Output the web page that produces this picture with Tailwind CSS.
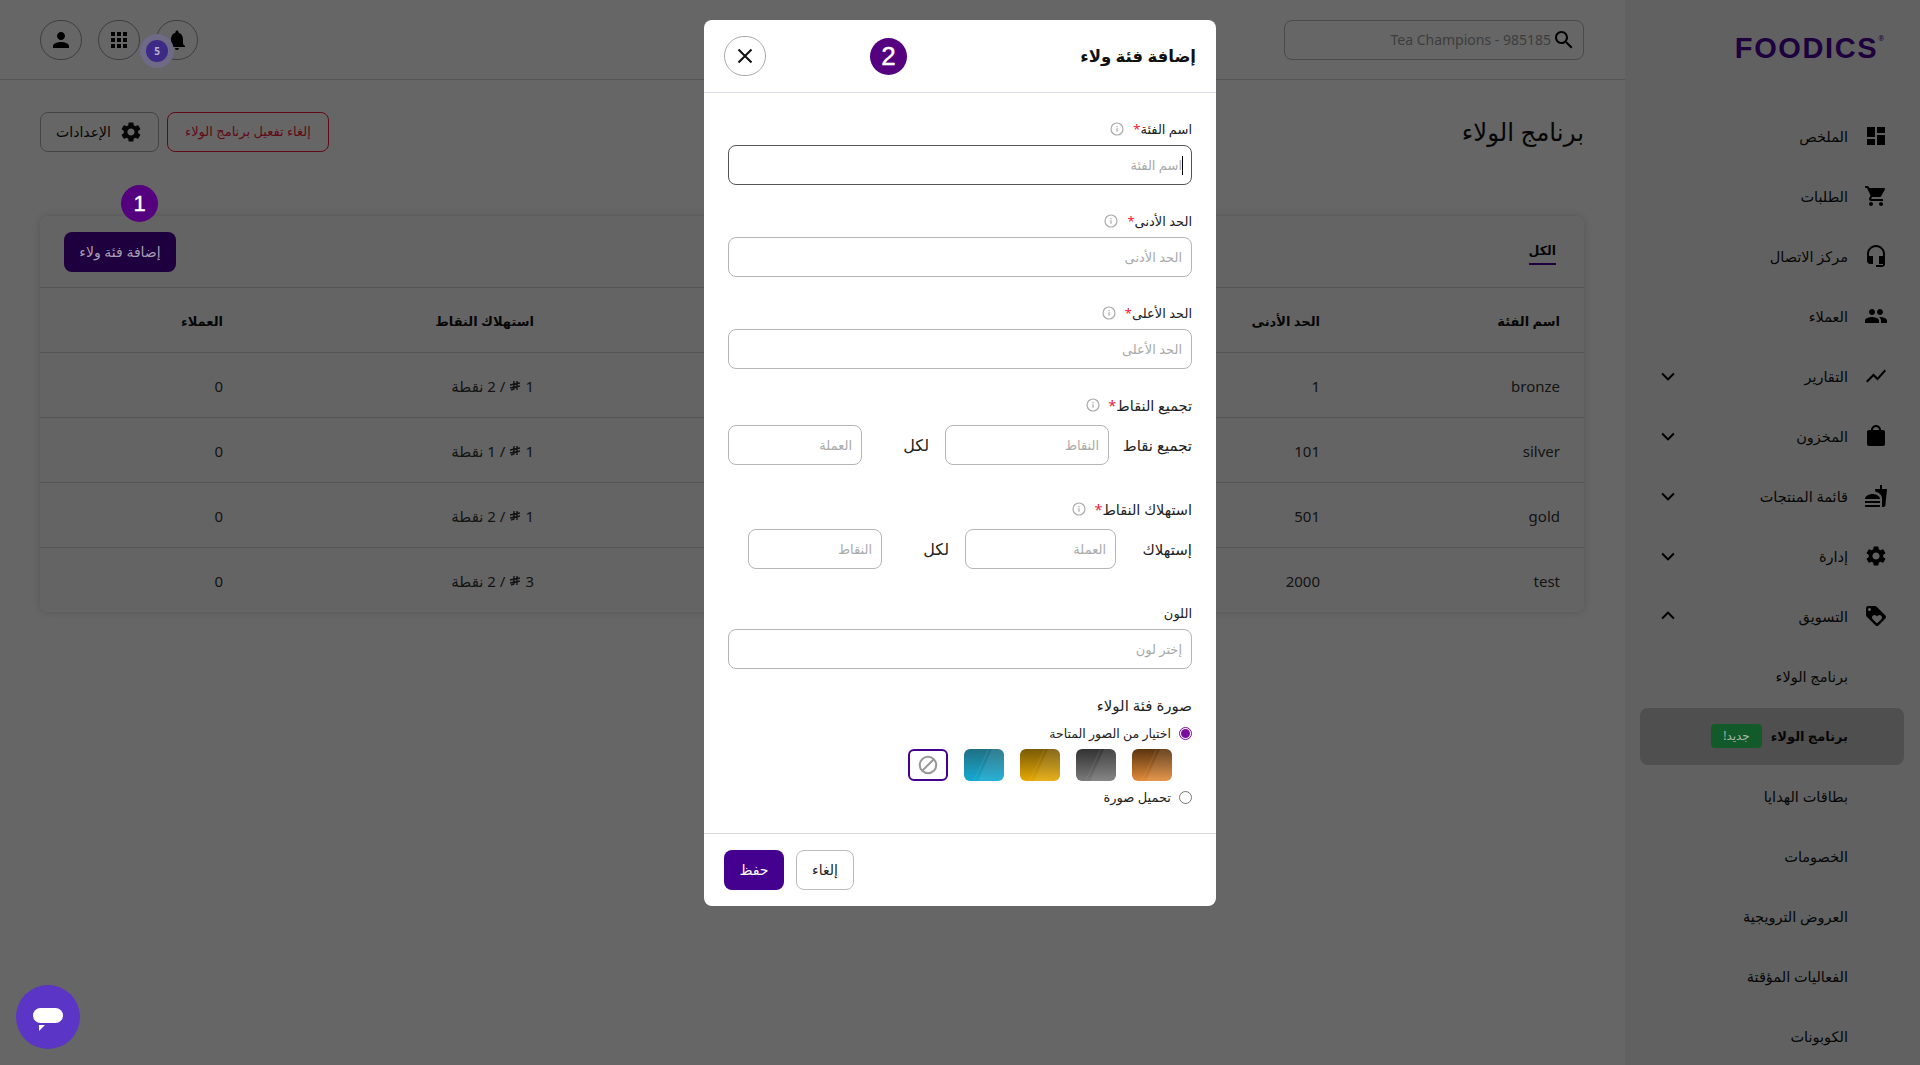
<!DOCTYPE html>
<html lang="ar">
<head>
<meta charset="utf-8">
<title>برنامج الولاء</title>
<script src="https://cdn.jsdelivr.net/npm/@tailwindcss/browser@4"></script>
</head>
<body class="overflow-hidden">
<div dir="ltr" class="relative w-[1920px] h-[1065px] overflow-hidden flex bg-white text-[#111] font-['Noto_Sans','DejaVu_Sans',sans-serif]">

  <!-- MAIN -->
  <main class="w-[1625px] h-full flex flex-col">
    <header class="h-20 shrink-0 border-b border-[#d4d4d4] pl-10 pr-[41px] flex items-center justify-between">
      <div class="flex items-center gap-4">
        <div class="w-[42px] h-10 rounded-full border border-[#999] flex items-center justify-center">
          <svg viewBox="0 0 24 24" class="w-6 h-6" fill="#000"><path d="M12 12c2.21 0 4-1.79 4-4s-1.79-4-4-4-4 1.79-4 4 1.79 4 4 4zm0 2c-2.67 0-8 1.34-8 4v2h16v-2c0-2.66-5.33-4-8-4z"/></svg>
        </div>
        <div class="w-[42px] h-10 rounded-full border border-[#999] flex items-center justify-center">
          <svg viewBox="0 0 24 24" class="w-6 h-6" fill="#000"><path d="M4 8h4V4H4v4zm6 12h4v-4h-4v4zm-6 0h4v-4H4v4zm0-6h4v-4H4v4zm6 0h4v-4h-4v4zm6-10v4h4V4h-4zm-6 4h4V4h-4v4zm6 6h4v-4h-4v4zm0 6h4v-4h-4v4z"/></svg>
        </div>
        <div class="w-[42px] h-10 rounded-full border border-[#999] flex items-center justify-center">
          <svg viewBox="0 0 24 24" class="w-6 h-6" fill="#000"><path d="M12 22c1.1 0 2-.9 2-2h-4c0 1.1.89 2 2 2zm6-6v-5c0-3.07-1.64-5.64-4.5-6.32V4c0-.83-.67-1.5-1.5-1.5s-1.5.67-1.5 1.5v.68C7.63 5.36 6 7.92 6 11v5l-2 2v1h16v-1l-2-2z"/></svg>
        </div>
      </div>
      <div dir="rtl" class="w-[300px] h-10 rounded-lg border border-[#bbb] flex items-center pr-[7px]">
        <svg viewBox="0 0 24 24" class="w-6 h-6 shrink-0 ml-[1px]" fill="#000"><path d="M15.5 14h-.79l-.28-.27C15.41 12.59 16 11.11 16 9.5 16 5.91 13.09 3 9.5 3S3 5.91 3 9.5 5.91 16 9.5 16c1.61 0 3.09-.59 4.23-1.57l.27.28v.79l5 4.99L20.49 19l-4.99-5zm-6 0C7.01 14 5 11.99 5 9.5S7.01 5 9.5 5 14 7.01 14 9.5 11.99 14 9.5 14z"/></svg>
        <span dir="ltr" class="text-sm text-[#9a9a9a]">Tea Champions - 985185</span>
      </div>
    </header>

    <div class="pl-10 pr-[41px] pt-8">
      <div class="flex items-center justify-between h-10">
        <div class="flex items-center gap-2">
          <button class="w-[119px] h-10 rounded-lg border border-[#aaa] flex items-center justify-center gap-2 text-sm">
            <span dir="rtl" class="order-2">الإعدادات</span>
            <svg viewBox="0 0 24 24" class="w-6 h-6 order-3" fill="#111"><path d="M19.14 12.94c.04-.3.06-.61.06-.94 0-.32-.02-.64-.07-.94l2.03-1.58c.18-.14.23-.41.12-.61l-1.92-3.32c-.12-.22-.37-.29-.59-.22l-2.39.96c-.5-.38-1.03-.7-1.62-.94l-.36-2.54c-.04-.24-.24-.41-.48-.41h-3.84c-.24 0-.43.17-.47.41l-.36 2.54c-.59.24-1.13.57-1.62.94l-2.39-.96c-.22-.08-.47 0-.59.22L2.74 8.87c-.12.21-.08.47.12.61l2.03 1.58c-.05.3-.09.63-.09.94s.02.64.07.94l-2.03 1.58c-.18.14-.23.41-.12.61l1.92 3.32c.12.22.37.29.59.22l2.39-.96c.5.38 1.03.7 1.62.94l.36 2.54c.05.24.24.41.48.41h3.84c.24 0 .44-.17.47-.41l.36-2.54c.59-.24 1.13-.56 1.62-.94l2.39.96c.22.08.47 0 .59-.22l1.92-3.32c.12-.22.07-.47-.12-.61l-2.01-1.58zM12 15.6c-1.98 0-3.6-1.62-3.6-3.6s1.62-3.6 3.6-3.6 3.6 1.62 3.6 3.6-1.62 3.6-3.6 3.6z"/></svg>
          </button>
          <button dir="rtl" class="w-[162px] h-10 rounded-lg border border-[#f0183a] text-[#f0183a] text-[13px] whitespace-nowrap">إلغاء تفعيل برنامج الولاء</button>
        </div>
        <h1 dir="rtl" class="text-[24.5px] leading-10 text-[#111]">برنامج الولاء</h1>
      </div>

      <section class="mt-16 h-[396px] rounded-lg bg-[#fbfbfb] shadow-[0_0_8px_rgba(0,0,0,0.16)]">
        <div class="h-[72px] border-b border-[#d4d4d4] px-6 flex items-center justify-between">
          <button dir="rtl" class="w-28 h-10 rounded-lg bg-[#4a0099] text-sm"><span class="relative z-10 text-[#a99db5]">إضافة فئة ولاء</span></button>
          <span dir="rtl" class="mr-1 text-[12.5px] font-bold border-b-2 border-[#4a0099] pb-[3px] mt-[4px]">الكل</span>
        </div>
        <div dir="rtl">
          <div class="grid grid-cols-[240px_220px_260px_306px_311px_207px] h-[65px] items-center border-b border-[#d4d4d4] font-bold text-[13px] pt-[4px] [&>*]:pr-6">
            <div>اسم الفئة</div><div>الحد الأدنى</div><div></div><div></div><div>استهلاك النقاط</div><div>العملاء</div>
          </div>
          <div class="grid grid-cols-[240px_220px_260px_306px_311px_207px] h-[65px] items-center border-b border-[#d4d4d4] text-[#333] text-[15px] pt-[2px] [&>*]:pr-6">
            <div>bronze</div><div>1</div><div></div><div></div>
            <div class="flex items-center gap-1"><span>1</span><svg viewBox="0 0 12 12" class="w-3 h-3" fill="none" stroke="#333" stroke-width="1.4"><path d="M5 1v8l-3 1M8 1v9M1 5l10-2M1 8l10-2"/></svg><span>/ 2 نقطة</span></div><div>0</div>
          </div>
          <div class="grid grid-cols-[240px_220px_260px_306px_311px_207px] h-[65px] items-center border-b border-[#d4d4d4] text-[#333] text-[15px] pt-[2px] [&>*]:pr-6">
            <div>silver</div><div>101</div><div></div><div></div>
            <div class="flex items-center gap-1"><span>1</span><svg viewBox="0 0 12 12" class="w-3 h-3" fill="none" stroke="#333" stroke-width="1.4"><path d="M5 1v8l-3 1M8 1v9M1 5l10-2M1 8l10-2"/></svg><span>/ 1 نقطة</span></div><div>0</div>
          </div>
          <div class="grid grid-cols-[240px_220px_260px_306px_311px_207px] h-[65px] items-center border-b border-[#d4d4d4] text-[#333] text-[15px] pt-[2px] [&>*]:pr-6">
            <div>gold</div><div>501</div><div></div><div></div>
            <div class="flex items-center gap-1"><span>1</span><svg viewBox="0 0 12 12" class="w-3 h-3" fill="none" stroke="#333" stroke-width="1.4"><path d="M5 1v8l-3 1M8 1v9M1 5l10-2M1 8l10-2"/></svg><span>/ 2 نقطة</span></div><div>0</div>
          </div>
          <div class="grid grid-cols-[240px_220px_260px_306px_311px_207px] h-[64px] items-center text-[#333] text-[15px] pt-[2px] [&>*]:pr-6">
            <div>test</div><div>2000</div><div></div><div></div>
            <div class="flex items-center gap-1"><span>3</span><svg viewBox="0 0 12 12" class="w-3 h-3" fill="none" stroke="#333" stroke-width="1.4"><path d="M5 1v8l-3 1M8 1v9M1 5l10-2M1 8l10-2"/></svg><span>/ 2 نقطة</span></div><div>0</div>
          </div>
        </div>
      </section>
    </div>
  </main>

  <!-- SIDEBAR -->
  <aside dir="rtl" class="w-[295px] h-full shrink-0 bg-[#f2f2f2] overflow-hidden">
    <div class="h-[106px] pr-[36px] pt-[34px]" dir="ltr">
      <div class="flex justify-end items-start">
        <span class="text-[29px] leading-[28px] font-black tracking-[1.6px] text-[#4a0099] font-['Liberation_Sans',sans-serif]">FOODICS</span>
        <span class="text-[7px] leading-[10px] text-[#4a0099]">®</span>
      </div>
    </div>
    <nav class="text-[14.5px] text-[#111] [&_span.mr-\[16px\]]:mt-[2px]">
      <div class="h-[60px] flex items-center pr-[32px]"><svg viewBox="0 0 24 24" class="w-6 h-6 shrink-0" fill="#000"><path d="M3 13h8V3H3v10zm0 8h8v-6H3v6zm10 0h8V11h-8v10zm0-18v6h8V3h-8z"/></svg><span class="mr-[16px]">الملخص</span></div>
      <div class="h-[60px] flex items-center pr-[32px]"><svg viewBox="0 0 24 24" class="w-6 h-6 shrink-0" fill="#000"><path d="M7 18c-1.1 0-1.99.9-1.99 2S5.9 22 7 22s2-.9 2-2-.9-2-2-2zM1 2v2h2l3.6 7.59-1.35 2.45c-.16.28-.25.61-.25.96 0 1.1.9 2 2 2h12v-2H7.42c-.14 0-.25-.11-.25-.25l.03-.12.9-1.63h7.45c.75 0 1.41-.41 1.75-1.03l3.58-6.49c.08-.14.12-.31.12-.48 0-.55-.45-1-1-1H5.21l-.94-2H1zm16 16c-1.1 0-1.99.9-1.99 2s.89 2 1.99 2 2-.9 2-2-.9-2-2-2z"/></svg><span class="mr-[16px]">الطلبات</span></div>
      <div class="h-[60px] flex items-center pr-[32px]"><svg viewBox="0 0 24 24" class="w-6 h-6 shrink-0" fill="#000"><path d="M12 1c-4.97 0-9 4.03-9 9v7c0 1.66 1.34 3 3 3h3v-8H5v-2c0-3.87 3.13-7 7-7s7 3.13 7 7v2h-4v8h4v1h-7v2h6c1.66 0 3-1.34 3-3V10c0-4.97-4.03-9-9-9z"/></svg><span class="mr-[16px]">مركز الاتصال</span></div>
      <div class="h-[60px] flex items-center pr-[32px]"><svg viewBox="0 0 24 24" class="w-6 h-6 shrink-0" fill="#000"><path d="M16 11c1.66 0 2.99-1.34 2.99-3S17.66 5 16 5s-3 1.34-3 3 1.34 3 3 3zm-8 0c1.66 0 2.99-1.34 2.99-3S9.66 5 8 5 5 6.34 5 8s1.34 3 3 3zm0 2c-2.33 0-7 1.17-7 3.5V19h14v-2.5C15 14.17 10.33 13 8 13zm8 0c-.29 0-.62.02-.97.05 1.16.84 1.97 1.97 1.97 3.45V19h6v-2.5c0-2.33-4.67-3.5-7-3.5z"/></svg><span class="mr-[16px]">العملاء</span></div>
      <div class="h-[60px] flex items-center justify-between pr-[32px] pl-[33px]"><div class="flex items-center"><svg viewBox="0 0 24 24" class="w-6 h-6 shrink-0" fill="#000"><path d="M3.5 18.49l6-6.01 4 4L22 6.92l-1.41-1.41-7.09 7.97-4-4L2 16.99z"/></svg><span class="mr-[16px]">التقارير</span></div><svg viewBox="0 0 24 24" class="w-5 h-5" fill="none" stroke="#000" stroke-width="2.4"><path d="M5 9l7 7 7-7"/></svg></div>
      <div class="h-[60px] flex items-center justify-between pr-[32px] pl-[33px]"><div class="flex items-center"><svg viewBox="0 0 24 24" class="w-6 h-6 shrink-0" fill="#000"><path d="M19 6h-2c0-2.76-2.24-5-5-5S7 3.24 7 6H5c-1.1 0-1.99.9-1.99 2L3 20c0 1.1.9 2 2 2h14c1.1 0 2-.9 2-2V8c0-1.1-.9-2-2-2zm-7-3c1.66 0 3 1.34 3 3H9c0-1.66 1.34-3 3-3z"/></svg><span class="mr-[16px]">المخزون</span></div><svg viewBox="0 0 24 24" class="w-5 h-5" fill="none" stroke="#000" stroke-width="2.4"><path d="M5 9l7 7 7-7"/></svg></div>
      <div class="h-[60px] flex items-center justify-between pr-[32px] pl-[33px]"><div class="flex items-center"><svg viewBox="0 0 24 24" class="w-6 h-6 shrink-0" fill="#000"><path d="M18.06 22.99h1.66c.84 0 1.53-.64 1.63-1.46L23 5.05h-5V1h-1.97v4.05h-4.97l.3 2.34c1.71.47 3.31 1.32 4.27 2.26 1.44 1.42 2.43 2.89 2.43 5.29v8.05zM1 21.99V21h15.03v.99c0 .55-.45 1-1.01 1H2.01c-.56 0-1.01-.45-1.01-1zm15.03-7c0-4-6.01-4.99-7.52-4.99-1.5 0-7.51.99-7.51 4.99zM1.02 17h15v2h-15z"/></svg><span class="mr-[16px]">قائمة المنتجات</span></div><svg viewBox="0 0 24 24" class="w-5 h-5" fill="none" stroke="#000" stroke-width="2.4"><path d="M5 9l7 7 7-7"/></svg></div>
      <div class="h-[60px] flex items-center justify-between pr-[32px] pl-[33px]"><div class="flex items-center"><svg viewBox="0 0 24 24" class="w-6 h-6 shrink-0" fill="#000"><path d="M19.14 12.94c.04-.3.06-.61.06-.94 0-.32-.02-.64-.07-.94l2.03-1.58c.18-.14.23-.41.12-.61l-1.92-3.32c-.12-.22-.37-.29-.59-.22l-2.39.96c-.5-.38-1.03-.7-1.62-.94l-.36-2.54c-.04-.24-.24-.41-.48-.41h-3.84c-.24 0-.43.17-.47.41l-.36 2.54c-.59.24-1.13.57-1.62.94l-2.39-.96c-.22-.08-.47 0-.59.22L2.74 8.87c-.12.21-.08.47.12.61l2.03 1.58c-.05.3-.09.63-.09.94s.02.64.07.94l-2.03 1.58c-.18.14-.23.41-.12.61l1.92 3.32c.12.22.37.29.59.22l2.39-.96c.5.38 1.03.7 1.62.94l.36 2.54c.05.24.24.41.48.41h3.84c.24 0 .44-.17.47-.41l.36-2.54c.59-.24 1.13-.56 1.62-.94l2.39.96c.22.08.47 0 .59-.22l1.92-3.32c.12-.22.07-.47-.12-.61l-2.01-1.58zM12 15.6c-1.98 0-3.6-1.62-3.6-3.6s1.62-3.6 3.6-3.6 3.6 1.62 3.6 3.6-1.62 3.6-3.6 3.6z"/></svg><span class="mr-[16px]">إدارة</span></div><svg viewBox="0 0 24 24" class="w-5 h-5" fill="none" stroke="#000" stroke-width="2.4"><path d="M5 9l7 7 7-7"/></svg></div>
      <div class="h-[60px] flex items-center justify-between pr-[32px] pl-[33px]"><div class="flex items-center"><svg viewBox="0 0 24 24" class="w-6 h-6 shrink-0" fill="#000" fill-rule="evenodd"><path d="M21.41 11.58l-9-9C12.05 2.22 11.55 2 11 2H4c-1.1 0-2 .9-2 2v7c0 .55.22 1.05.59 1.42l9 9c.36.36.86.58 1.41.58s1.05-.22 1.41-.59l7-7c.37-.36.59-.86.59-1.41s-.23-1.06-.59-1.42zM5.5 7C4.67 7 4 6.33 4 5.5S4.67 4 5.5 4 7 4.67 7 5.5 6.33 7 5.5 7zm11.77 8.27L13 19.54l-4.27-4.27C8.28 14.81 8 14.19 8 13.5c0-1.38 1.12-2.5 2.5-2.5.69 0 1.32.28 1.77.74l.73.72.73-.73c.45-.45 1.08-.73 1.77-.73 1.38 0 2.5 1.12 2.5 2.5 0 .69-.28 1.32-.73 1.77z"/></svg><span class="mr-[16px]">التسويق</span></div><svg viewBox="0 0 24 24" class="w-5 h-5" fill="none" stroke="#000" stroke-width="2.4"><path d="M5 15l7-7 7 7"/></svg></div>
      <div class="h-[60px] flex items-center pr-[72px] pt-[2px]">برنامج الولاء</div>
      <div class="h-[60px] flex items-center mr-4 w-[264px]"><div class="h-[57px] w-full rounded-lg bg-[#c6c6c6] flex items-center pr-[56px] gap-[12px]"><span class="font-bold text-[13px] w-[74px] whitespace-nowrap mt-[2px]">برنامج الولاء</span><span class="w-[51px] h-6 rounded bg-[#2de169] text-xs flex items-center justify-center"><span class="relative z-10 text-[#a8b8a8]">جديد!</span></span></div></div>
      <div class="h-[60px] flex items-center pr-[72px] pt-[2px]">بطاقات الهدايا</div>
      <div class="h-[60px] flex items-center pr-[72px] pt-[2px]">الخصومات</div>
      <div class="h-[60px] flex items-center pr-[72px] pt-[2px]">العروض الترويجية</div>
      <div class="h-[60px] flex items-center pr-[72px] pt-[2px]">الفعاليات المؤقتة</div>
      <div class="h-[60px] flex items-center pr-[72px] pt-[2px]">الكوبونات</div>
    </nav>
  </aside>

  <!-- OVERLAY -->
  <div class="absolute inset-0 bg-black/60 flex justify-center items-start">
    <!-- header notification count -->
    <div class="absolute left-[140px] top-[34px] w-[34px] h-[34px] rounded-full bg-[#6f6a85] flex items-center justify-center">
      <span class="w-[22px] h-[22px] rounded-full bg-[#3d2a86] text-[#b9b2c9] text-[10px] font-bold flex items-center justify-center">5</span>
    </div>
    <!-- step markers -->
    <div class="absolute left-[121px] top-[185px] w-[37px] h-[37px] rounded-full bg-[#55007f] text-white text-[22px] [-webkit-text-stroke:0.4px_white] font-['Liberation_Sans',sans-serif] flex items-center justify-center">1</div>
    <div class="absolute left-[870px] top-[38px] w-[37px] h-[37px] rounded-full bg-[#55007f] text-white text-[26px] [-webkit-text-stroke:0.4px_white] font-['Liberation_Sans',sans-serif] flex items-center justify-center z-10">2</div>
    <!-- chat -->
    <div class="absolute left-4 top-[985px] w-16 h-16 rounded-full bg-[#5b35c5]">
      <span class="absolute left-[17px] top-[23px] w-[30px] h-[15px] rounded-[8px] bg-white"></span>
      <svg viewBox="0 0 6 6" class="absolute left-[23px] top-[40px] w-[6px] h-[6px]" fill="#fff"><path d="M0 0h6L0 6z"/></svg>
    </div>

    <!-- MODAL -->
    <div dir="rtl" class="mt-5 w-[512px] h-[886px] rounded-lg bg-white flex flex-col">
      <div class="h-[73px] shrink-0 border-b border-[#dcdce8] flex items-center justify-between pr-5 pl-5">
        <h2 class="text-[16.5px] font-bold text-[#111]">إضافة فئة ولاء</h2>
        <button class="w-[42px] h-10 rounded-full border border-[#aaa] flex items-center justify-center">
          <svg viewBox="0 0 24 24" class="w-6 h-6" fill="none" stroke="#111" stroke-width="2"><path d="M5.5 5.5l13 13M18.5 5.5l-13 13"/></svg>
        </button>
      </div>
      <div class="px-6 pt-[26px] flex-1 text-[13px] text-[#222]">
        <!-- name -->
        <div class="h-5 flex items-center gap-[9px] mb-[6px]"><span class="mt-[2px]">اسم الفئة<b class="text-[#f0183a] font-normal">*</b></span><svg viewBox="0 0 14 14" class="w-[14px] h-[14px]" fill="none" stroke="#aaa" stroke-width="1.2"><circle cx="7" cy="7" r="6"/><path d="M7 6.2v3.6M7 4v1.2"/></svg></div>
        <div class="relative h-10">
          <input placeholder="اسم الفئة" class="w-full h-10 rounded-lg border border-[#555] px-[9px] text-[13px] outline-none placeholder:text-[#aaa]">
          <span class="absolute right-[9px] top-[11px] w-px h-[19px] bg-black"></span>
        </div>
        <!-- min -->
        <div class="mt-[26px] h-5 flex items-center gap-[9px] mb-[6px]"><span class="mt-[2px]">الحد الأدنى<b class="text-[#f0183a] font-normal">*</b></span><svg viewBox="0 0 14 14" class="w-[14px] h-[14px]" fill="none" stroke="#aaa" stroke-width="1.2"><circle cx="7" cy="7" r="6"/><path d="M7 6.2v3.6M7 4v1.2"/></svg></div>
        <input placeholder="الحد الأدنى" class="block w-full h-10 rounded-lg border border-[#b5b5b5] px-[9px] text-[13px] outline-none placeholder:text-[#aaa]">
        <!-- max -->
        <div class="mt-[26px] h-5 flex items-center gap-[9px] mb-[6px]"><span class="mt-[2px]">الحد الأعلى<b class="text-[#f0183a] font-normal">*</b></span><svg viewBox="0 0 14 14" class="w-[14px] h-[14px]" fill="none" stroke="#aaa" stroke-width="1.2"><circle cx="7" cy="7" r="6"/><path d="M7 6.2v3.6M7 4v1.2"/></svg></div>
        <input placeholder="الحد الأعلى" class="block w-full h-10 rounded-lg border border-[#b5b5b5] px-[9px] text-[13px] outline-none placeholder:text-[#aaa]">
        <!-- earn -->
        <div class="mt-[26px] h-5 flex items-center gap-[8px] mb-[10px] text-[14.5px]"><span class="mt-[2px]">تجميع النقاط<b class="text-[#f0183a] font-normal">*</b></span><svg viewBox="0 0 14 14" class="w-[14px] h-[14px]" fill="none" stroke="#aaa" stroke-width="1.2"><circle cx="7" cy="7" r="6"/><path d="M7 6.2v3.6M7 4v1.2"/></svg></div>
        <div class="flex items-center h-10 text-[15px]">
          <span class="w-[83px] shrink-0">تجميع نقاط</span>
          <input placeholder="النقاط" class="w-[164px] h-10 rounded-lg border border-[#b5b5b5] px-[9px] text-[13px] outline-none placeholder:text-[#aaa]">
          <span class="w-[83px] shrink-0 pr-4 text-[16px]">لكل</span>
          <input placeholder="العملة" class="w-[134px] h-10 rounded-lg border border-[#b5b5b5] px-[9px] text-[13px] outline-none placeholder:text-[#aaa]">
        </div>
        <!-- redeem -->
        <div class="mt-[34px] h-5 flex items-center gap-[8px] mb-[10px] text-[14.5px]"><span class="mt-[2px]">استهلاك النقاط<b class="text-[#f0183a] font-normal">*</b></span><svg viewBox="0 0 14 14" class="w-[14px] h-[14px]" fill="none" stroke="#aaa" stroke-width="1.2"><circle cx="7" cy="7" r="6"/><path d="M7 6.2v3.6M7 4v1.2"/></svg></div>
        <div class="flex items-center h-10 text-[15px]">
          <span class="w-[76px] shrink-0">إستهلاك</span>
          <input placeholder="العملة" class="w-[151px] h-10 rounded-lg border border-[#b5b5b5] px-[9px] text-[13px] outline-none placeholder:text-[#aaa]">
          <span class="w-[83px] shrink-0 pr-4 text-[16px]">لكل</span>
          <input placeholder="النقاط" class="w-[134px] h-10 rounded-lg border border-[#b5b5b5] px-[9px] text-[13px] outline-none placeholder:text-[#aaa]">
        </div>
        <!-- colour -->
        <div class="mt-[34px] h-5 flex items-center mb-[6px] pt-[2px]">اللون</div>
        <input placeholder="إختر لون" class="block w-full h-10 rounded-lg border border-[#b5b5b5] px-[9px] text-[13px] outline-none placeholder:text-[#aaa]">
        <!-- image -->
        <div class="mt-[26px] h-5 flex items-center text-[15px]">صورة فئة الولاء</div>
        <div class="mt-[8px] h-5 flex items-center gap-[8px] text-[12.5px]">
          <span class="w-[13px] h-[13px] rounded-full border border-[#7a0d9c] flex items-center justify-center"><span class="w-[9px] h-[9px] rounded-full bg-[#7a0d9c]"></span></span>
          <span class="mt-[2px]">اختيار من الصور المتاحة</span>
        </div>
        <div class="mt-[6px] pr-5 flex gap-4">
          <div class="relative w-10 h-8 rounded-md overflow-hidden bg-linear-to-b from-[#5c3510] to-[#e38d3a]"><svg viewBox="0 0 40 32" class="absolute inset-0 w-full h-full" fill="#fff" fill-opacity="0.09"><path d="M28 0h12v32H14zM24 0h1.500L10 32H9z"/></svg></div>
          <div class="relative w-10 h-8 rounded-md overflow-hidden bg-linear-to-b from-[#333] to-[#7a7a7a]"><svg viewBox="0 0 40 32" class="absolute inset-0 w-full h-full" fill="#fff" fill-opacity="0.09"><path d="M28 0h12v32H14zM24 0h1.500L10 32H9z"/></svg></div>
          <div class="relative w-10 h-8 rounded-md overflow-hidden bg-linear-to-b from-[#7a5a05] to-[#e6a906]"><svg viewBox="0 0 40 32" class="absolute inset-0 w-full h-full" fill="#fff" fill-opacity="0.09"><path d="M28 0h12v32H14zM24 0h1.500L10 32H9z"/></svg></div>
          <div class="relative w-10 h-8 rounded-md overflow-hidden bg-linear-to-b from-[#1f7084] to-[#12aad3]"><svg viewBox="0 0 40 32" class="absolute inset-0 w-full h-full" fill="#fff" fill-opacity="0.09"><path d="M28 0h12v32H14zM24 0h1.500L10 32H9z"/></svg></div>
          <div class="w-10 h-8 rounded-md border-2 border-[#44008f] flex items-center justify-center"><svg viewBox="0 0 24 24" class="w-[22px] h-[22px]" fill="none" stroke="#999" stroke-width="2.2"><circle cx="12" cy="12" r="9"/><path d="M18.3 5.7L5.7 18.3"/></svg></div>
        </div>
        <div class="mt-[6px] h-5 flex items-center gap-[8px] text-[13px]">
          <span class="w-[13px] h-[13px] rounded-full border border-[#777]"></span>
          <span class="mt-[2px]">تحميل صورة</span>
        </div>
      </div>
      <div class="h-[73px] shrink-0 border-t border-[#d9d9d9] pl-5 flex items-center justify-end gap-3 text-sm">
        <button class="w-[58px] h-10 rounded-lg border border-[#bbb] text-[#222]">إلغاء</button>
        <button class="w-[60px] h-10 rounded-lg bg-[#44008f] text-white">حفظ</button>
      </div>
    </div>
  </div>
</div>
</body>
</html>
